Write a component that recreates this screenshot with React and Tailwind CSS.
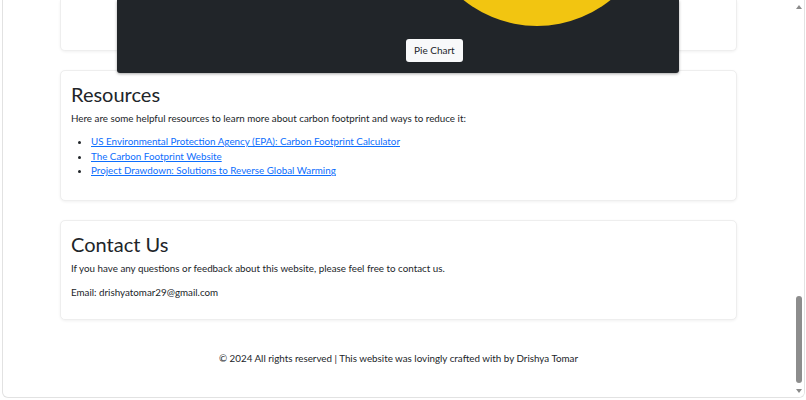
import React from "react";

function Scrollbar() {
  return (
    <div className="w-[10px] h-full flex flex-col items-center bg-white">
      <div className="h-[14px] flex items-center justify-center">
        <div className="w-0 h-0 border-l-[3px] border-r-[3px] border-b-[4px] border-l-transparent border-r-transparent border-b-[#8a8a8a]" />
      </div>
      <div className="flex-1 w-full flex flex-col justify-end">
        <div className="mx-auto w-[6px] h-[87px] rounded-full bg-[#8d8d8d] mb-[2px]" />
      </div>
      <div className="h-[12px] flex items-center justify-center">
        <div className="w-0 h-0 border-l-[3px] border-r-[3px] border-t-[4px] border-l-transparent border-r-transparent border-t-[#8a8a8a]" />
      </div>
    </div>
  );
}

function ChartModal() {
  return (
    <div className="absolute left-[114px] top-0 w-[562px] h-[73px] bg-[#212529] rounded-b-[3px] shadow-[0_1px_3px_rgba(0,0,0,0.35)] overflow-hidden">
      <svg className="absolute left-0 top-0" width="562" height="73" viewBox="0 0 562 73">
        <circle cx="420" cy="-91" r="117" fill="#f2c511" />
      </svg>
      <div className="relative pl-[289px] pt-[36px]">
        <button className="h-[23px] px-[8px] rounded-[3px] bg-[#f8f9fa] text-[#212529] text-[10px] leading-[23px]">
          Pie Chart
        </button>
      </div>
    </div>
  );
}

export default function App() {
  return (
    <div
      className="w-[806px] h-[400px] bg-white overflow-hidden"
      style={{ fontFamily: 'Lato, "Noto Sans", sans-serif' }}
    >
      <div className="ml-[2px] w-[803px] h-[398px] border border-t-0 border-[#e2e2e2] rounded-b-[6px] overflow-hidden flex">
        <div className="relative flex-1 h-full text-[#212529]">
          <div className="px-[57px] flex flex-col gap-[19px]">
            {/* tail of the previous card */}
            <div className="h-[51px] bg-white rounded-b-[5px] border border-t-0 border-[#eeeeee] shadow-[0_1px_3px_rgba(0,0,0,0.06)]" />

            {/* Resources */}
            <div className="bg-white rounded-[5px] border border-[#eeeeee] shadow-[0_1px_3px_rgba(0,0,0,0.06)] px-[10px] pt-[11px] pb-[12px]">
              <h2 className="text-[20px] leading-[25px] font-normal mb-[3px]">Resources</h2>
              <p className="text-[9.8px] leading-[16px] mb-[8px]">
                Here are some helpful resources to learn more about carbon footprint and ways to reduce it:
              </p>
              <ul className="list-disc pl-[20px] text-[9.8px] leading-[14.5px] mb-[10px]">
                <li>
                  <a href="#" className="text-[#0d6efd] underline">
                    US Environmental Protection Agency (EPA): Carbon Footprint Calculator
                  </a>
                </li>
                <li>
                  <a href="#" className="text-[#0d6efd] underline">
                    The Carbon Footprint Website
                  </a>
                </li>
                <li>
                  <a href="#" className="text-[#0d6efd] underline">
                    Project Drawdown: Solutions to Reverse Global Warming
                  </a>
                </li>
              </ul>
            </div>

            {/* Contact */}
            <div className="bg-white rounded-[5px] border border-[#eeeeee] shadow-[0_1px_3px_rgba(0,0,0,0.06)] px-[10px] pt-[11px] pb-[19px]">
              <h2 className="text-[20px] leading-[25px] font-normal mb-[3px]">Contact Us</h2>
              <p className="text-[9.8px] leading-[16px] mb-[8px]">
                If you have any questions or feedback about this website, please feel free to contact us.
              </p>
              <p className="text-[9.8px] leading-[16px]">Email: drishyatomar29@gmail.com</p>
            </div>
          </div>

          <footer className="pt-[30px] text-center text-[9.8px] leading-[16px]">
            © 2024 All rights reserved | This website was lovingly crafted with by Drishya Tomar
          </footer>

          <ChartModal />
        </div>
        <Scrollbar />
      </div>
    </div>
  );
}
